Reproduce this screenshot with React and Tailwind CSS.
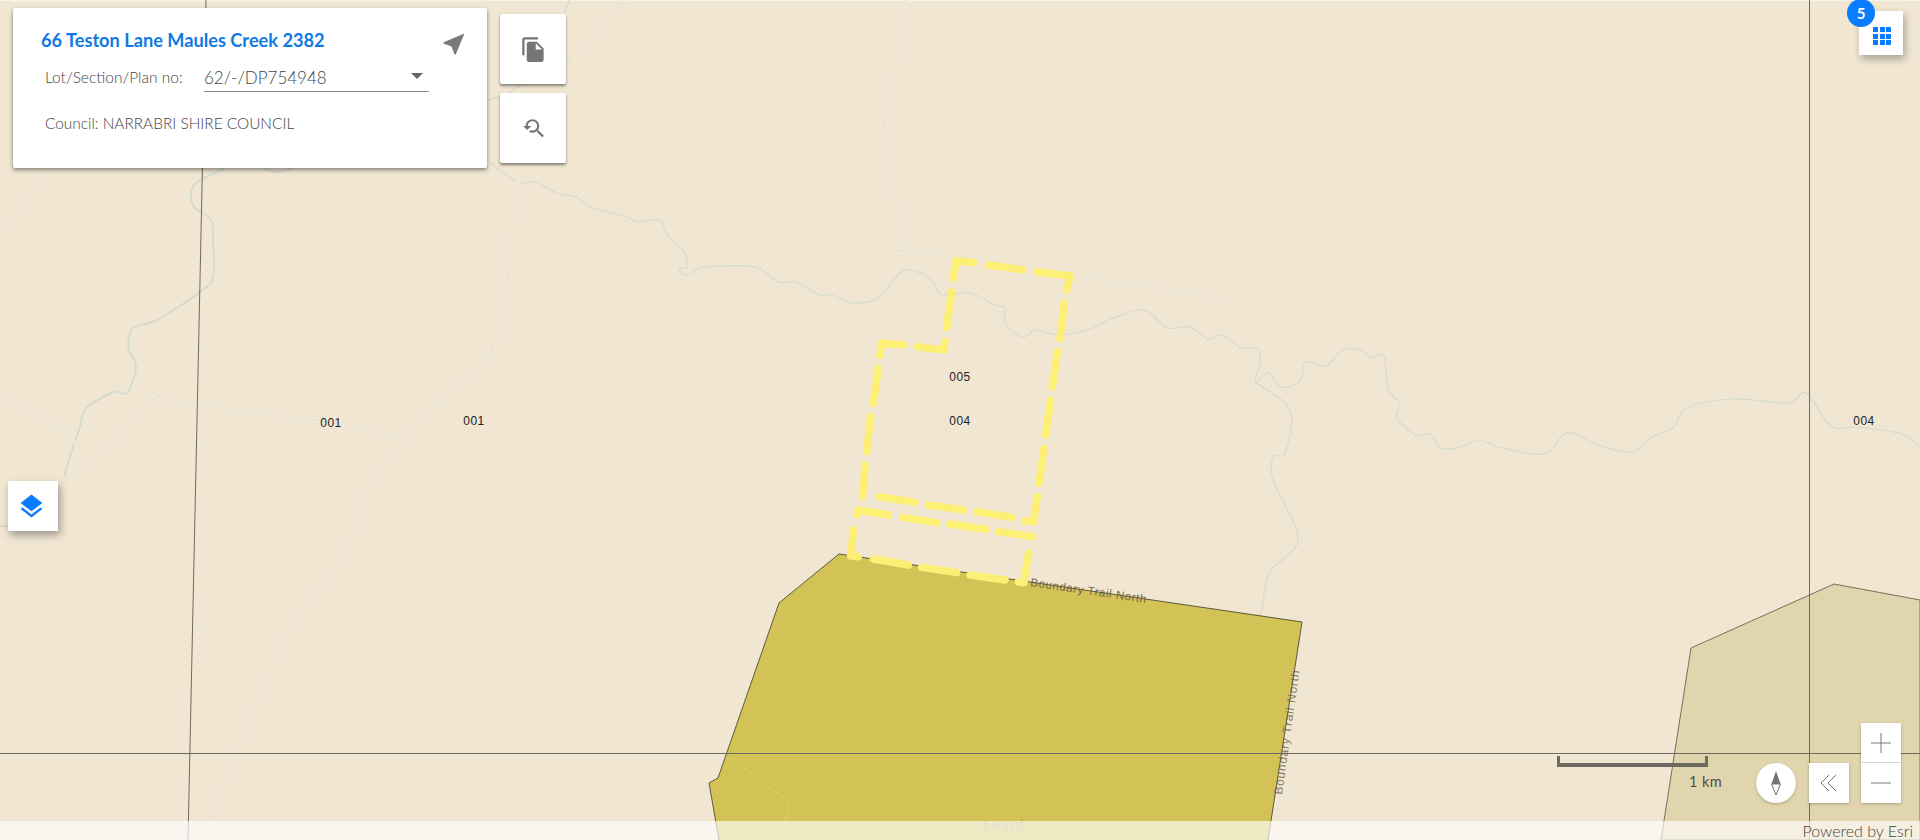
import React from 'react';

// catmull-rom through the traced points, so the creeks and tracks don't look like polylines
function smooth(trace) {
  const n = trace.match(/\d+(\.\d+)?/g).map(Number);
  const p = [];
  for (let i = 0; i < n.length; i += 2) p.push([n[i], n[i + 1]]);
  let d = `M${p[0][0]} ${p[0][1]}`;
  for (let i = 0; i < p.length - 1; i++) {
    const a = p[Math.max(i - 1, 0)];
    const b = p[i];
    const c = p[i + 1];
    const e = p[Math.min(i + 2, p.length - 1)];
    const c1x = b[0] + (c[0] - a[0]) / 6;
    const c1y = b[1] + (c[1] - a[1]) / 6;
    const c2x = c[0] - (e[0] - b[0]) / 6;
    const c2y = c[1] - (e[1] - b[1]) / 6;
    d += ` C${c1x.toFixed(1)} ${c1y.toFixed(1)} ${c2x.toFixed(1)} ${c2y.toFixed(1)} ${c[0]} ${c[1]}`;
  }
  return d;
}

const rivers = [
  { w: 2, t: '225 168 196 183 191 197 195 208 211 220 213 240 213 277 200 292 157 320 134 327 129 337 129 350 136 367 127 393 114 392 86 408 80 427 71 453 64 477' },
  { w: 2, t: '0 526 12 526' },
  { w: 2, t: '264 169 278 172 293 168' },
  { w: 1.5, t: '569 0 560 25' },
  { w: 1.5, t: '521 85 505 95 488 100' },
  { w: 1.2, t: '490 163 518 182 534 182 557 193 577 197 590 207 628 217 638 222 659 220 669 237 684 252 687 267 679 268 684 275 694 272 704 267 755 267 778 282 796 282 819 295 832 295 852 303 878 298 901 272 921 273 934 283 942 295 970 293 995 305 1005 308 1005 323 1022 337 1037 330 1060 335 1093 328 1113 318 1140 310 1153 315 1167 328 1190 327 1208 339 1223 335 1241 348 1257 348 1260 363 1255 382 1269 373 1280 387 1299 382 1306 362 1326 366 1342 350 1361 350 1372 358 1384 356 1388 390 1400 403 1397 418 1416 435 1430 434 1441 448 1457 448 1480 440 1498 447 1544 454 1563 435 1576 434 1595 444 1632 452 1652 437 1673 428 1687 408 1733 399 1788 403 1806 393 1831 426 1857 427 1902 434 1920 447' },
  { w: 1.2, t: '1255 382 1290 410 1285 453 1274 456 1273 480 1298 539 1269 573 1261 612 1248 620 1231 660 1208 658 1179 713 1189 750 1109 787 1097 820' },
];

const roads = [
  '906 0 886 133 886 157 906 240 910 249 915 251 1222 298',
  '518 180 496 340 491 357 439 400 396 450 368 487 343 560 300 612 257 700 210 820 200 840',
  '0 396 68 435 80 462 93 462 154 402 168 400 379 433 396 450',
  '46 170 0 233',
  '625 0 567 63',
];

const lotLabels = [
  { x: 960, y: 381, t: '005' },
  { x: 960, y: 425, t: '004' },
  { x: 331, y: 427, t: '001' },
  { x: 474, y: 425, t: '001' },
  { x: 1864, y: 425, t: '004' },
];

// yellow lot boundary dashes, traced one by one, in the coordinates of the 3x crop at (820,240)
const lotDashes = [
  '400 115 408 62 460 68', '505 75 608 90', '650 95 750 108 740 150',
  '733 190 720 295', '712 335 697 440', '692 480 677 585', '672 625 657 730', '652 770 640 845 615 842',
  '575 832 470 815', '430 810 325 795', '285 787 178 770',
  '128 770 135 675', '140 635 152 530', '160 490 175 385', '180 345 185 310 250 315',
  '293 320 372 330 375 305', '380 262 395 155',
  '110 825 115 810 205 825', '248 832 350 848', '390 852 497 868', '535 875 638 890',
  '625 940 612 1028 595 1026', '555 1020 450 1005', '410 998 305 982', '265 975 160 957', '115 950 92 948 100 870',
];

function dashPoints(trace) {
  const n = trace.split(' ').map(Number);
  const out = [];
  for (let i = 0; i < n.length; i += 2) out.push(`${820 + n[i] / 3},${240 + n[i + 1] / 3}`);
  return out.join(' ');
}

function MapLayer() {
  return (
    <svg className="absolute inset-0" width="1920" height="840" viewBox="0 0 1920 840">
      <line x1="0" y1="0.5" x2="1920" y2="0.5" stroke="#f8f3e8" />
      {rivers.map((r, i) => (
        <path key={i} d={smooth(r.t)} fill="none" stroke="#d6dbd0" strokeWidth={r.w} strokeLinejoin="round" />
      ))}
      {roads.map((t, i) => (
        <g key={i}>
          <path d={smooth(t)} fill="none" stroke="#eae1cd" strokeWidth="3.5" />
          <path d={smooth(t)} fill="none" stroke="#f3ebdb" strokeWidth="1.6" />
        </g>
      ))}

      {/* state forest polygons */}
      <path d="M1834 584 L1920 600 L1920 840 L1661 840 L1691 648 Z" fill="#e1d5ad" stroke="#77705c" strokeWidth="1" />
      <path
        d="M839 554 L1302 622 L1268 840 L719 840 L709 783 L718 778 L779 603 Z"
        fill="#d1bf4e"
        fillOpacity="0.93"
      />
      <path d="M730 757 L789 802 L785 823" fill="none" stroke="#dccf73" strokeWidth="1" strokeDasharray="5 3" />

      {/* road names */}
      <text
        x="1030"
        y="586"
        transform="rotate(8.3 1030 586)"
        fontFamily="'Liberation Sans', sans-serif"
        fontSize="11.5"
        letterSpacing="0.6"
        fill="#75694a"
      >
        Boundary Trail North
      </text>
      <text
        x="1282"
        y="795"
        transform="rotate(-82 1282 795)"
        fontFamily="'Liberation Sans', sans-serif"
        fontSize="12"
        letterSpacing="0.8"
        fill="#8a7f5c"
      >
        Boundary Trail North
      </text>
      <text
        x="1004"
        y="830"
        textAnchor="middle"
        fontFamily="'Liberation Sans', sans-serif"
        fontSize="14"
        letterSpacing="1"
        fill="#a8a488"
      >
        Leard
      </text>
      <path
        d="M719 840 L709 783 L718 778 L779 603 L839 554 L1302 622 L1268 840"
        fill="none"
        stroke="#5c5a3a"
        strokeWidth="1"
      />

      {/* grid lines */}
      <line x1="0" y1="753.5" x2="1920" y2="753.5" stroke="#6f6a60" strokeWidth="1" />
      <line x1="206" y1="0" x2="188" y2="840" stroke="#6f6a60" strokeWidth="1" />
      <line x1="1809.5" y1="0" x2="1809.5" y2="840" stroke="#6f6a60" strokeWidth="1" />

      {/* selected lots */}
      <g fill="none" stroke="#fdee74" strokeWidth="7.5" strokeLinecap="round" strokeLinejoin="round">
        {lotDashes.map((t, i) => (
          <polyline key={i} points={dashPoints(t)} />
        ))}
      </g>

      {lotLabels.map((l, i) => (
        <text
          key={i}
          x={l.x}
          y={l.y}
          textAnchor="middle"
          fontFamily="'Liberation Sans', sans-serif"
          fontSize="12"
          letterSpacing="0.5"
          fill="#222222"
        >
          {l.t}
        </text>
      ))}
    </svg>
  );
}

function SideButton({ children }) {
  return (
    <button className="flex h-[70px] w-[66px] items-center justify-center rounded-[2px] bg-white shadow-[0_2px_3px_rgba(0,0,0,0.45)]">
      {children}
    </button>
  );
}

export default function App() {
  return (
    <div className="relative h-[840px] w-[1920px] overflow-hidden bg-[#f0e6d2] font-['Lato',sans-serif]">
      <MapLayer />

      {/* property card and tools */}
      <div className="absolute left-[13px] top-[8px] flex items-start gap-[13px]">
        <div className="h-[160px] w-[474px] rounded-[2px] bg-white pl-[28px] pr-[19px] pt-[14px] shadow-[0_2px_4px_rgba(0,0,0,0.45)]">
          <div className="flex items-center justify-between">
            <span className="text-[18.2px] font-bold leading-[22px] text-[#0f7ae5]">66 Teston Lane Maules Creek 2382</span>
            <svg width="28" height="28" viewBox="0 0 24 24" className="mt-[8px]" fill="#7a7a7a">
              <path d="M21 3L3 10.53v.98l6.84 2.65L12.48 21h.98L21 3z" />
            </svg>
          </div>
          <div className="mt-[4px] flex items-center pl-[4px]">
            <span className="w-[159px] text-[15.5px] font-light leading-[20px] text-[#444444]">Lot/Section/Plan no:</span>
            <div className="flex h-[30px] w-[225px] items-center justify-between border-b border-[#8a8a8a] pr-[6px] pt-[3px]">
              <span className="text-[17px] font-light text-[#444444]">62/-/DP754948</span>
              <span className="mb-[4px] h-0 w-0 border-x-[6px] border-t-[6px] border-x-transparent border-t-[#666666]" />
            </div>
          </div>
          <div className="mt-[21px] pl-[4px] text-[15.4px] font-light leading-[20px] text-[#444444]">
            Council: NARRABRI SHIRE COUNCIL
          </div>
        </div>
        <div className="mt-[6px] flex flex-col gap-[9px]">
          <SideButton>
            <svg width="27" height="27" viewBox="0 0 24 24" fill="#757575">
              <path d="M16 1H4c-1.1 0-2 .9-2 2v14h2V3h12V1zm-1 4l6 6v10c0 1.1-.9 2-2 2H7.99C6.89 23 6 22.1 6 21l.01-14c0-1.1.89-2 1.99-2h7zm-1 7h5.5L14 6.5V12z" />
            </svg>
          </SideButton>
          <SideButton>
            <svg width="25" height="25" viewBox="0 0 24 24" fill="#757575">
              <path d="M17.01 14h-.8l-.27-.27c.98-1.14 1.57-2.61 1.57-4.23 0-3.59-2.91-6.5-6.5-6.5s-6.5 3-6.5 6.5H2l3.84 4 4.16-4H6.51C6.51 7 8.53 5 11.01 5s4.5 2.01 4.5 4.5c0 2.48-2.02 4.5-4.5 4.5-.65 0-1.26-.14-1.82-.38L7.71 15.1c.97.57 2.09.9 3.3.9 1.61 0 3.08-.59 4.22-1.57l.27.27v.79l5.01 5L21.99 19l-4.98-5z" />
            </svg>
          </SideButton>
        </div>
      </div>

      {/* layers */}
      <button className="absolute left-[8px] top-[481px] flex h-[50px] w-[50px] items-center justify-center bg-white pr-[3px] shadow-[2px_4px_8px_rgba(0,0,0,0.35)]">
        <svg width="29" height="29" viewBox="0 0 24 24" fill="#0a7cff">
          <path d="M11.99 18.54l-7.37-5.73L3 14.07l9 7 9-7-1.63-1.27-7.38 5.74zM12 16l7.36-5.73L21 9l-9-7-9 7 1.63 1.27L12 16z" />
        </svg>
      </button>

      {/* widget grid with count badge */}
      <div className="absolute left-[1859px] top-[11px] flex h-[44px] w-[44px] items-center justify-center bg-white pl-[2px] pt-[6px] shadow-[2px_4px_8px_rgba(0,0,0,0.3)]">
        <div className="grid grid-cols-3 gap-[1.5px]">
          {[0, 1, 2, 3, 4, 5, 6, 7, 8].map((i) => (
            <span key={i} className="h-[5px] w-[5px] bg-[#0a7cff]" />
          ))}
        </div>
        <span className="absolute left-[-12px] top-[-12px] flex h-[28px] w-[28px] items-center justify-center rounded-full bg-[#0a7cff] text-[15px] font-bold text-white">
          5
        </span>
      </div>

      {/* scale bar */}
      <div className="absolute left-[1557px] top-[756px] w-[151px]">
        <div className="h-[11px] border-x-[3px] border-b-[4px] border-[#6f6a60]" />
        <div className="absolute left-[132px] top-[16px] whitespace-nowrap text-[14.5px] font-normal leading-[20px] tracking-[0.4px] text-[#4d4d4d]">
          1 km
        </div>
      </div>

      {/* map navigation */}
      <div className="absolute left-[1756px] top-[723px] flex items-end">
        <div className="flex h-[40px] w-[40px] items-center justify-center rounded-full bg-white shadow-[0_1px_3px_rgba(0,0,0,0.25)]">
          <svg width="12" height="26" viewBox="0 0 12 26">
            <path d="M6 1 L10.5 14 L1.5 14 Z" fill="#757575" />
            <path d="M1.5 14 L10.5 14 L6 25 Z" fill="#ffffff" stroke="#757575" strokeWidth="1" />
          </svg>
        </div>
        <button className="ml-[13px] flex h-[40px] w-[40px] items-center justify-center bg-white shadow-[0_1px_3px_rgba(0,0,0,0.25)]">
          <svg width="18" height="18" viewBox="0 0 18 18" fill="none" stroke="#747474" strokeWidth="1">
            <path d="M9 1 L1 9 L9 17" />
            <path d="M16 1 L8 9 L16 17" />
          </svg>
        </button>
        <div className="ml-[12px] flex flex-col shadow-[0_1px_3px_rgba(0,0,0,0.25)]">
          <button className="flex h-[40px] w-[40px] items-center justify-center border-b border-[#d8d8d8] bg-white">
            <svg width="20" height="20" viewBox="0 0 20 20" stroke="#7a7a7a" strokeWidth="1">
              <path d="M0 10 H20 M10 0 V20" />
            </svg>
          </button>
          <button className="flex h-[40px] w-[40px] items-center justify-center bg-white">
            <svg width="20" height="20" viewBox="0 0 20 20" stroke="#7a7a7a" strokeWidth="1">
              <path d="M0 10 H20" />
            </svg>
          </button>
        </div>
      </div>

      {/* attribution */}
      <div className="absolute bottom-0 left-0 right-0 flex h-[19px] items-center justify-end bg-white/65 pr-[7px] text-[16px] font-light text-[#444444]">
        Powered by Esri
      </div>
    </div>
  );
}
